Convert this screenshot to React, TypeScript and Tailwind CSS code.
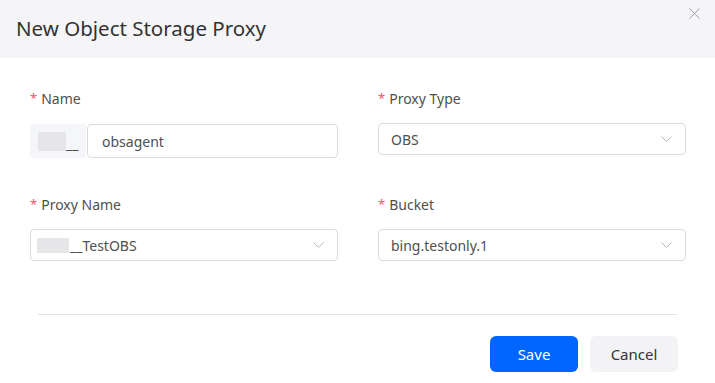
import React from 'react'

const Label = ({ text }: { text: string }) => (
  <div className="flex items-center h-5 text-[14px] text-[#505050]">
    <span className="text-[#f0566b] mr-1 text-[13px] leading-none">*</span>
    {text}
  </div>
)

const Chevron = () => (
  <svg width="11" height="6" viewBox="0 0 11 6" className="shrink-0">
    <path d="M0.5 0.5 L5.5 5.3 L10.5 0.5" fill="none" stroke="#b4b4b8" strokeWidth="1" />
  </svg>
)

const Select = ({ children }: { children: React.ReactNode }) => (
  <div className="flex items-center justify-between h-[32px] border border-[#dcdce0] rounded-[4px] pl-3 pr-[13px] text-[14px] text-[#505050]">
    <div className="flex items-center">{children}</div>
    <Chevron />
  </div>
)

export default function App() {
  return (
    <div className="w-[715px] h-[383px] bg-white" style={{ fontFamily: '"Noto Sans", "Open Sans", sans-serif' }}>
      <div className="relative h-[58px] bg-[#f5f5f7] pl-4 pt-[14px]">
        <h1 className="text-[20.5px] leading-[28px] text-[#333]">New Object Storage Proxy</h1>
        <button className="absolute right-[15px] top-[8px] w-[11px] h-[11px]">
          <svg width="11" height="11" viewBox="0 0 11 11">
            <path d="M0.5 0.5 L10.5 10.5 M10.5 0.5 L0.5 10.5" stroke="#a0a0a8" strokeWidth="1" />
          </svg>
        </button>
      </div>

      <div className="grid grid-cols-[308px_308px] gap-x-[40px] px-[30px] pt-[30px]">
        <div>
          <Label text="Name" />
          <div className="flex mt-[16px] h-[34px]">
            <div className="w-[56px] bg-[#f5f6fa] rounded-l-[4px] flex items-center pl-2">
              <span className="inline-block w-[28px] h-[19px] bg-[#e6e6e8]" />
              <span className="text-[14px] text-[#505050] self-end mb-[7px] leading-none">__</span>
            </div>
            <div className="flex-1 ml-[1px] border border-[#dcdce0] rounded-[4px] flex items-center pl-[14px] text-[14px] text-[#505050]">
              obsagent
            </div>
          </div>
        </div>
        <div>
          <Label text="Proxy Type" />
          <div className="mt-[15px]">
            <Select>OBS</Select>
          </div>
        </div>

        <div className="mt-[36px]">
          <Label text="Proxy Name" />
          <div className="mt-[15px]">
            <Select>
              <span className="-ml-[6px] mr-[1px] inline-block w-[32px] h-[15px] bg-[#e6e6e8]" />
              __TestOBS
            </Select>
          </div>
        </div>
        <div className="mt-[36px]">
          <Label text="Bucket" />
          <div className="mt-[15px]">
            <Select>bing.testonly.1</Select>
          </div>
        </div>
      </div>

      <div className="mx-[38px] mt-[53px] border-t border-[#e2e2e6]" />

      <div className="flex justify-end gap-3 pr-[37px] mt-[21px]">
        <button className="w-[88px] h-[36px] rounded-[6px] bg-[#0066ff] text-white text-[15px]">Save</button>
        <button className="w-[88px] h-[36px] rounded-[6px] bg-[#f3f3f5] text-[#333] text-[15px]">Cancel</button>
      </div>
    </div>
  )
}
